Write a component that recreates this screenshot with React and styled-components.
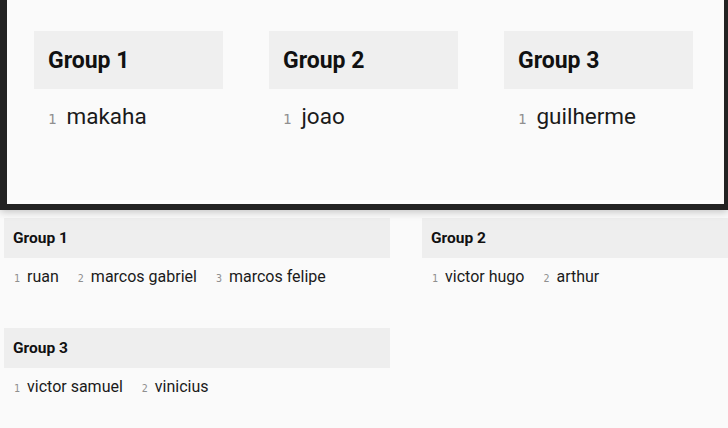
import React from 'react';
import styled, { createGlobalStyle } from 'styled-components';

const GlobalStyle = createGlobalStyle`
    html, body {
        margin: 0;
        padding: 0;
        background: #fafafa;
        overflow: hidden;
        font-family: Roboto, "Liberation Sans", sans-serif;
    }
`;

const PREVIEW_GROUPS = [
    { name: 'Group 1', members: ['makaha'] },
    { name: 'Group 2', members: ['joao'] },
    { name: 'Group 3', members: ['guilherme'] }
];

const GROUPS = [
    { name: 'Group 1', members: ['ruan', 'marcos gabriel', 'marcos felipe'] },
    { name: 'Group 2', members: ['victor hugo', 'arthur'] },
    { name: 'Group 3', members: ['victor samuel', 'vinicius'] }
];

const Page = styled.div`
    width: 728px;
    height: 428px;
    overflow: hidden;
    background: #fafafa;
`;

// screenshot of the wide layout, framed
const Frame = styled.div`
    box-sizing: border-box;
    width: 728px;
    height: 210px;
    background: #fafafa;
    border-left: 7px solid #222;
    border-right: 4px solid #222;
    border-bottom: 6px solid #222;
    box-shadow: 0 2px 8px rgba(0, 0, 0, 0.22);
    position: relative;
    z-index: 1;
`;

const PreviewGrid = styled.div`
    display: grid;
    grid-template-columns: repeat(3, 189px);
    column-gap: 46px;
    padding: 31px 0 0 27px;
`;

const Grid = styled.div`
    display: grid;
    grid-template-columns: repeat(2, 386px);
    column-gap: 32px;
    row-gap: 39px;
    padding: 8px 0 0 4px;
`;

const Group = styled.div`
    display: flex;
    flex-direction: column;
`;

const Header = styled.div`
    display: flex;
    align-items: center;
    height: ${p => p.$big ? 58 : 40}px;
    padding-left: ${p => p.$big ? 14 : 9}px;
    background: ${p => p.$big ? '#efefef' : '#eeeeee'};
    font-size: ${p => p.$big ? 23 : 15.5}px;
    font-weight: 700;
    color: #111;
`;

const Members = styled.div`
    display: flex;
    align-items: baseline;
    gap: ${p => p.$big ? 30 : 19}px;
    margin-top: ${p => p.$big ? 12 : 9}px;
    padding-left: ${p => p.$big ? 14 : 10}px;
    line-height: ${p => p.$big ? 30 : 20}px;
`;

const Member = styled.span`
    display: flex;
    align-items: baseline;
    gap: ${p => p.$big ? 10 : 7}px;
`;

const Index = styled.span`
    font-family: "DejaVu Sans Mono", "Liberation Mono", monospace;
    font-size: ${p => p.$big ? 14 : 10}px;
    color: #8f8f8f;
`;

const Name = styled.span`
    font-size: ${p => p.$big ? 22.5 : 16}px;
    color: #1a1a1a;
`;

function GroupCard({ group, big }) {
    return (
        <Group>
            <Header $big={big}>{group.name}</Header>
            <Members $big={big}>
                {group.members.map((m, i) => (
                    <Member key={m} $big={big}>
                        <Index $big={big}>{i + 1}</Index>
                        <Name $big={big}>{m}</Name>
                    </Member>
                ))}
            </Members>
        </Group>
    );
}

export default function App() {
    return (
        <Page>
            <GlobalStyle />
            <Frame>
                <PreviewGrid>
                    {PREVIEW_GROUPS.map(g => (
                        <GroupCard key={g.name} group={g} big />
                    ))}
                </PreviewGrid>
            </Frame>
            <Grid>
                {GROUPS.map(g => (
                    <GroupCard key={g.name} group={g} />
                ))}
            </Grid>
        </Page>
    );
}
